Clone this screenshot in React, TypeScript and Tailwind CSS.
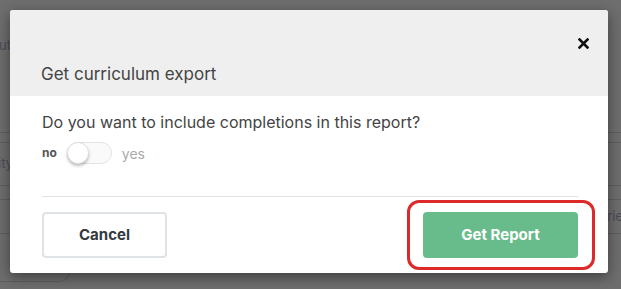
import { useState } from "react";

const FONT = { fontFamily: "Inter, 'Noto Sans', sans-serif" };

function Toggle() {
  const [on, setOn] = useState(false);
  return (
    <div className="flex items-center gap-[10px]">
      <span className="text-[12px] font-bold text-[#555]">no</span>
      <button
        onClick={() => setOn(!on)}
        className="relative h-[22px] w-[45px] rounded-full border border-[#e4e4e4] bg-[#fafafa]"
      >
        <span
          className={
            "absolute top-[-1px] h-[22px] w-[22px] rounded-full border border-[#e0e0e0] bg-white shadow-[0_2px_3px_rgba(0,0,0,0.25)] " +
            (on ? "left-[22px]" : "left-[-1px]")
          }
        />
      </button>
      <span className="text-[14px] text-[#aaa]">yes</span>
    </div>
  );
}

export default function App() {
  return (
    <div className="relative h-[289px] w-[621px] overflow-hidden bg-[#6e6e6e]" style={FONT}>
      {/* dimmed page underneath */}
      <div className="flex flex-col text-[13px] text-[#4b4b57]">
        <div className="flex h-[55px] items-end">
          <span className="-ml-[1px]">uth</span>
        </div>
        <div className="h-[78px] border-b border-[#5f5f5f]" />
        <div className="h-[10px] border-b border-[#5f5f5f]" />
        <div className="flex h-[43px] items-center border-b border-[#5f5f5f]">
          <span className="-ml-[2px]">ity</span>
        </div>
        <div className="h-[14px] border-b border-[#5f5f5f]" />
        <div className="flex h-[34px] items-center justify-end border-b border-[#5f5f5f]">
          <span className="-mr-[2px]">rie</span>
        </div>
        <div className="h-[48px] w-[70px] rounded-br-[10px] border-b border-r border-[#5f5f5f]" />
      </div>

      {/* modal */}
      <div className="absolute left-[10px] top-[10px] flex h-[263px] w-[598px] flex-col overflow-hidden rounded-[3px] bg-white shadow-[0_4px_14px_rgba(0,0,0,0.45)]">
        <div className="flex h-[86px] flex-col bg-[#efefef] pl-[31px] pr-[19px]">
          <div className="mt-[28px] flex justify-end">
            <button>
              <svg width="11" height="11" viewBox="0 0 11 11">
                <path d="M1.5 1.5 L9.5 9.5 M9.5 1.5 L1.5 9.5" stroke="#111" strokeWidth="2.6" strokeLinecap="square" />
              </svg>
            </button>
          </div>
          <div className="mt-[14px] text-[17px] leading-[22px] text-[#444]">Get curriculum export</div>
        </div>
        <div className="flex flex-1 flex-col pl-[32px] pr-[30px] pt-[16px]">
          <div className="text-[16px] leading-[20px] text-[#444]">
            Do you want to include completions in this report?
          </div>
          <div className="mt-[10px]">
            <Toggle />
          </div>
          <div className="mt-[32px] h-px w-full bg-[#e3e3e3]" />
          <div className="mt-[15px] flex items-center justify-between">
            <button className="h-[46px] w-[125px] rounded-[4px] border-2 border-[#dfe3e6] bg-white text-[15px] font-bold text-[#333a40]">
              Cancel
            </button>
            <div className="relative">
              <div className="pointer-events-none absolute -bottom-[12px] -left-[16px] -right-[17px] -top-[12px] rounded-[12px] border-[3px] border-[#dc2a2a]" />
              <button className="h-[46px] w-[155px] rounded-[4px] bg-[#68bb8b] text-[15px] font-bold text-white">
                Get Report
              </button>
            </div>
          </div>
        </div>
      </div>
    </div>
  );
}
